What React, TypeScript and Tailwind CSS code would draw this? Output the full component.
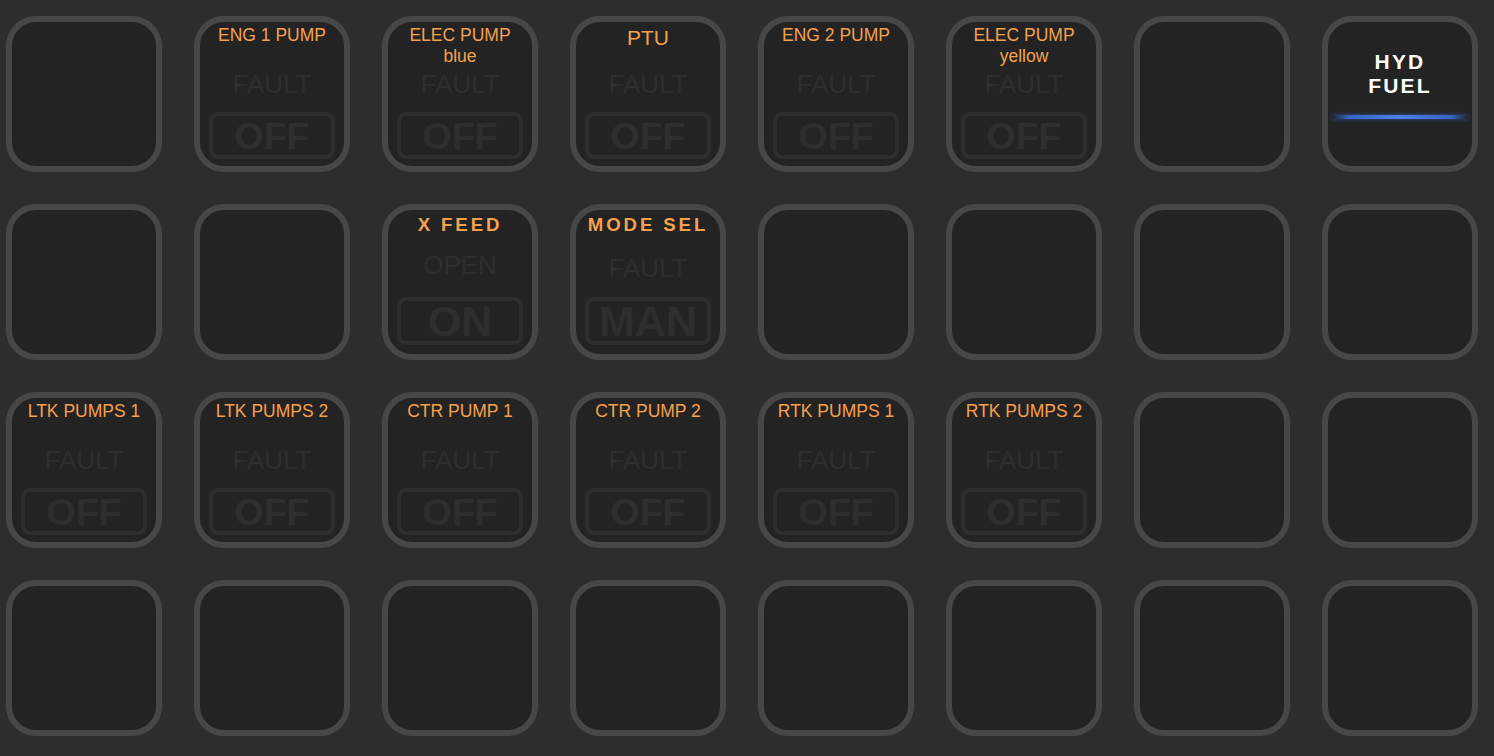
import React from "react";

type Cell =
  | { kind: "empty" }
  | { kind: "pump"; lines: string[]; big?: boolean }
  | { kind: "bold"; title: string; legend: string; box: string; th: string }
  | { kind: "hyd" };

const E: Cell = { kind: "empty" };

const cells: Cell[] = [
  E,
  { kind: "pump", lines: ["ENG 1 PUMP"] },
  { kind: "pump", lines: ["ELEC PUMP", "blue"] },
  { kind: "pump", lines: ["PTU"], big: true },
  { kind: "pump", lines: ["ENG 2 PUMP"] },
  { kind: "pump", lines: ["ELEC PUMP", "yellow"] },
  E,
  { kind: "hyd" },
  E,
  E,
  { kind: "bold", title: "X FEED", legend: "OPEN", box: "ON", th: "x" },
  { kind: "bold", title: "MODE SEL", legend: "FAULT", box: "MAN", th: "m" },
  E,
  E,
  E,
  E,
  { kind: "pump", lines: ["LTK PUMPS 1"] },
  { kind: "pump", lines: ["LTK PUMPS 2"] },
  { kind: "pump", lines: ["CTR PUMP 1"] },
  { kind: "pump", lines: ["CTR PUMP 2"] },
  { kind: "pump", lines: ["RTK PUMPS 1"] },
  { kind: "pump", lines: ["RTK PUMPS 2"] },
  E,
  E,
  E,
  E,
  E,
  E,
  E,
  E,
  E,
  E,
];

function Key({ children }: { children?: React.ReactNode }) {
  return (
    <div className="w-[156px] h-[156px] rounded-[30px] border-[6px] border-[#474747] bg-[#232323] overflow-hidden flex flex-col">
      {children}
    </div>
  );
}

function Legend({ text }: { text: string }) {
  return (
    <div className="h-[30px] leading-[30px] text-[26px] text-center text-[#2e2e2e] whitespace-nowrap">
      {text}
    </div>
  );
}

function PumpKey({ lines, big }: { lines: string[]; big?: boolean }) {
  return (
    <Key>
      {big ? (
        <div className="h-[47px] pt-[4px] text-center text-[21px] leading-[24px] text-[#f5a14e] whitespace-nowrap">
          {lines[0]}
        </div>
      ) : (
        <div className="h-[47px] pt-[3px] text-center text-[17.5px] leading-[21px] text-[#f5a14e] whitespace-nowrap">
          {lines.map((l) => (
            <div key={l}>{l}</div>
          ))}
        </div>
      )}
      <Legend text="FAULT" />
      <div className="mt-[13px] mx-auto w-[126px] h-[47px] border-[4px] border-[#2e2e2e] rounded-[9px] flex items-center justify-center">
        <span className="pt-[2px] text-[37.5px] leading-none font-bold text-[#2e2e2e]">OFF</span>
      </div>
    </Key>
  );
}

function BoldKey({ title, legend, box, th }: { title: string; legend: string; box: string; th: string }) {
  const isX = th === "x";
  return (
    <Key>
      <div
        className={
          (isX ? "h-[40px]" : "h-[43px]") +
          " pt-[4px] text-center text-[18.6px] leading-[21px] font-bold tracking-[2.9px] text-[#f5a14e] whitespace-nowrap"
        }
      >
        {title}
      </div>
      <Legend text={legend} />
      <div
        className={
          (isX ? "mt-[17px]" : "mt-[14px]") +
          " mx-auto w-[126px] h-[48px] border-[4px] border-[#2e2e2e] rounded-[9px] flex items-center justify-center"
        }
      >
        <span className="text-[43px] leading-none font-bold text-[#2e2e2e]">{box}</span>
      </div>
    </Key>
  );
}

function HydKey() {
  return (
    <Key>
      <div className="pt-[28px] text-center text-[21px] leading-[24px] font-bold tracking-[2.2px] text-white">
        <div>HYD</div>
        <div>FUEL</div>
      </div>
      <div className="mt-[17px] mx-[4px] h-[4px] rounded-full bg-[linear-gradient(to_right,rgba(50,90,190,0),#3563c4_12%,#4b80e6_50%,#3563c4_88%,rgba(50,90,190,0))] blur-[0.6px] shadow-[0_0_4px_rgba(70,120,230,0.6)]" />
    </Key>
  );
}

export default function App() {
  return (
    <div
      className="min-h-screen w-full bg-[#2d2d2d] pl-[6px] pt-[16px] pb-[20px]"
      style={{ fontFamily: '"Liberation Sans", Arial, sans-serif' }}
    >
      <div className="grid grid-cols-[repeat(8,156px)] gap-[32px]">
        {cells.map((c, i) => {
          if (c.kind === "empty") return <Key key={i} />;
          if (c.kind === "pump") return <PumpKey key={i} lines={c.lines} big={c.big} />;
          if (c.kind === "bold")
            return <BoldKey key={i} title={c.title} legend={c.legend} box={c.box} th={c.th} />;
          return <HydKey key={i} />;
        })}
      </div>
    </div>
  );
}
